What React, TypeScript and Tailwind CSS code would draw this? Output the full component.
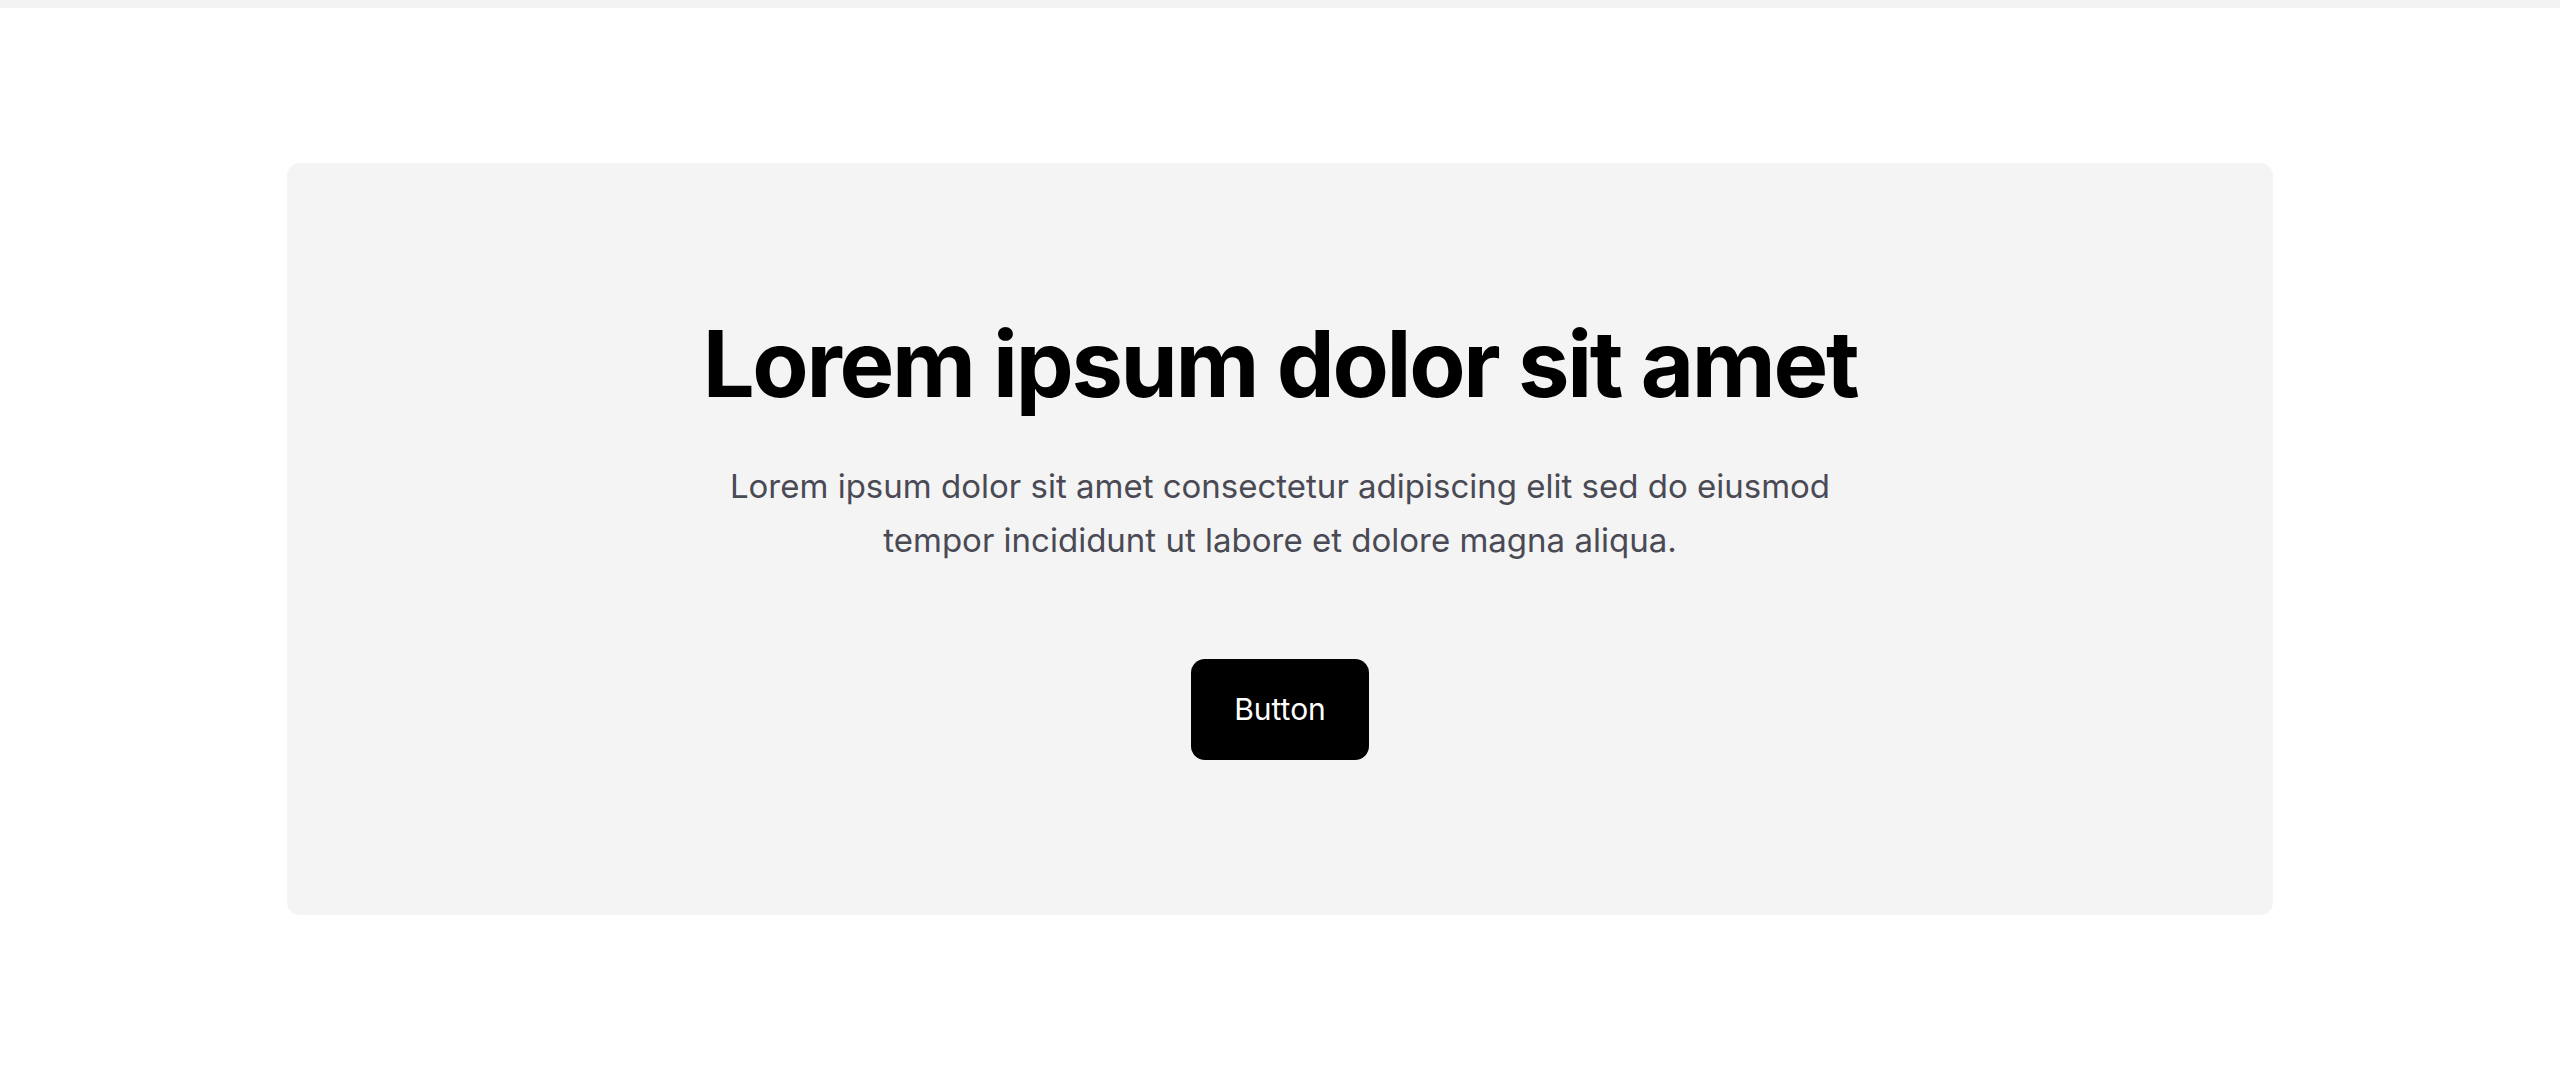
export default function App() {
  return (
    <div className="min-h-[1078px] bg-white" style={{ fontFamily: 'Inter, "Noto Sans", sans-serif' }}>
      <div className="h-[8px] bg-[#f3f3f3]" />
      <div className="pt-[155px] px-[287px]">
        <div className="bg-[#f4f4f4] rounded-[13px] pt-[155px] pb-[155px] flex flex-col items-center">
          <h1 className="text-[92px] leading-[92px] font-bold text-black tracking-[-2.3px]">Lorem ipsum dolor sit amet</h1>
          <p className="mt-[49px] max-w-[1130px] text-center text-[33px] leading-[54px] text-[#4a4a55]">
            Lorem ipsum dolor sit amet consectetur adipiscing elit sed do eiusmod tempor incididunt ut labore et dolore magna aliqua.
          </p>
          <button className="mt-[92px] bg-black text-white rounded-[14px] px-[43px] py-[28px] text-[30px] leading-[45px]">Button</button>
        </div>
      </div>
    </div>
  );
}
